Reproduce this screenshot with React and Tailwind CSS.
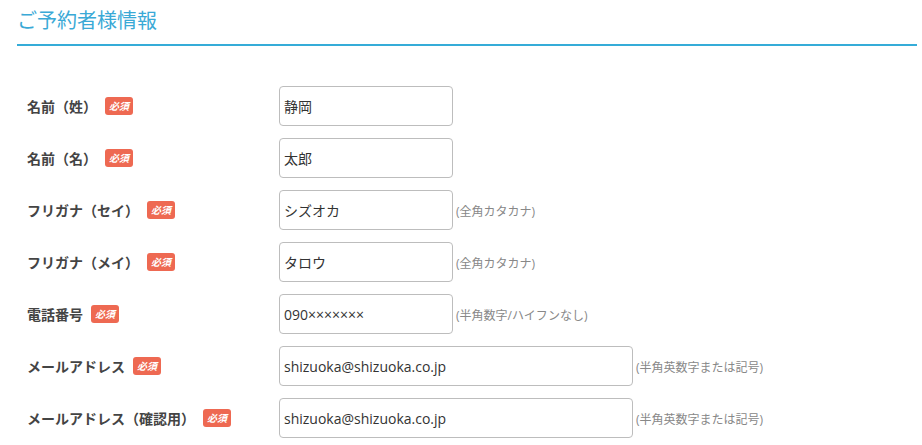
const rows = [
  { label: "名前（姓）", value: "静岡", wide: false },
  { label: "名前（名）", value: "太郎", wide: false },
  { label: "フリガナ（セイ）", value: "シズオカ", wide: false, hint: "(全角カタカナ)" },
  { label: "フリガナ（メイ）", value: "タロウ", wide: false, hint: "(全角カタカナ)" },
  { label: "電話番号", value: "090×××××××", wide: false, hint: "(半角数字/ハイフンなし)" },
  { label: "メールアドレス", value: "shizuoka@shizuoka.co.jp", wide: true, hint: "(半角英数字または記号)" },
  { label: "メールアドレス（確認用）", value: "shizuoka@shizuoka.co.jp", wide: true, hint: "(半角英数字または記号)" },
];

export default function App() {
  return (
    <div className="bg-white w-[922px] h-[445px] overflow-hidden font-['Open_Sans','Noto_Sans_CJK_JP',sans-serif]">
      <div className="ml-[17px] w-[900px]">
        <h2 className="pt-[6px] pb-[8px] text-[20px] leading-[30px] font-normal text-[#3aa9d6] border-b-2 border-[#35acd8]">
          ご予約者様情報
        </h2>

        <div className="mt-[40px] flex flex-col gap-[12px]">
          {rows.map((r) => (
            <div key={r.label} className="flex items-center h-[40px]">
              <div className="w-[262px] pl-[10px] flex items-center">
                <span className="text-[14px] font-bold text-[#444]">{r.label}</span>
                <span className="ml-[8px] inline-flex items-center justify-center w-[28px] h-[18px] rounded-[3px] bg-[#ee6952] text-white text-[10px] font-bold leading-none italic">
                  必須
                </span>
              </div>
              <div
                className={
                  "h-[40px] border border-[#bdbdbd] rounded-[4px] flex items-center pl-[4px] text-[14px] text-[#333] " +
                  (r.wide ? "w-[354px]" : "w-[174px]")
                }
              >
                {r.value}
              </div>
              {r.hint && (
                <span className="ml-[3px] mt-[4px] text-[12px] text-[#888]">{r.hint}</span>
              )}
            </div>
          ))}
        </div>
      </div>
    </div>
  );
}
